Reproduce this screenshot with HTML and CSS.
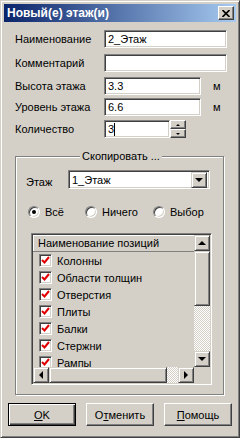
FILE: index.html
```html
<!DOCTYPE html>
<html lang="ru">
<head>
  <meta charset="UTF-8">
  <meta name="viewport" content="width=device-width, initial-scale=1.0">
  <title>Новый(е) этаж(и)</title>
  <link rel="stylesheet" href="styles.css">
</head>
<body>
  <div class="window">
    <div class="titlebar">
      <span class="title">Новый(е) этаж(и)</span>
      <div class="close-btn">
        <svg width="8" height="7" viewBox="0 0 8 7"><path d="M0.5 0 L7.5 7 M7.5 0 L0.5 7" stroke="#000" stroke-width="1.6"/></svg>
      </div>
    </div>

    <div class="content">
      <div class="row row-1">
        <span class="label">Наименование</span>
        <div class="edit edit-wide">2_Этаж</div>
      </div>
      <div class="row row-2">
        <span class="label">Комментарий</span>
        <div class="edit edit-wide"></div>
      </div>
      <div class="row row-3">
        <span class="label">Высота этажа</span>
        <div class="edit edit-mid">3.3</div>
        <span class="unit">м</span>
      </div>
      <div class="row row-4">
        <span class="label">Уровень этажа</span>
        <div class="edit edit-mid">6.6</div>
        <span class="unit">м</span>
      </div>
      <div class="row row-5">
        <span class="label">Количество</span>
        <div class="edit edit-short">3<span class="caret"></span></div>
        <div class="spinner">
          <div class="spin-btn"><span class="tri-up-small"></span></div>
          <div class="spin-btn"><span class="tri-down-small"></span></div>
        </div>
      </div>

      <div class="group">
        <span class="group-title">Скопировать ...</span>

        <div class="floor-row">
          <span class="floor-label">Этаж</span>
          <div class="combo">
            <span class="combo-text">1_Этаж</span>
            <div class="sbtn combo-btn"><span class="tri-down"></span></div>
          </div>
        </div>

        <div class="radios">
          <div class="radio-item r-all"><span class="radio checked"></span>Всё</div>
          <div class="radio-item r-none"><span class="radio"></span>Ничего</div>
          <div class="radio-item"><span class="radio"></span>Выбор</div>
        </div>

        <div class="list">
          <div class="list-body">
            <div class="list-header">Наименование позиций</div>
            <div class="list-row"><span class="check"><svg width="9" height="9" viewBox="0 0 9 9"><path d="M1 4 L3.5 6.5 L8 1" stroke="#e00000" stroke-width="2" fill="none"/></svg></span>Колонны</div>
            <div class="list-row"><span class="check"><svg width="9" height="9" viewBox="0 0 9 9"><path d="M1 4 L3.5 6.5 L8 1" stroke="#e00000" stroke-width="2" fill="none"/></svg></span>Области толщин</div>
            <div class="list-row"><span class="check"><svg width="9" height="9" viewBox="0 0 9 9"><path d="M1 4 L3.5 6.5 L8 1" stroke="#e00000" stroke-width="2" fill="none"/></svg></span>Отверстия</div>
            <div class="list-row"><span class="check"><svg width="9" height="9" viewBox="0 0 9 9"><path d="M1 4 L3.5 6.5 L8 1" stroke="#e00000" stroke-width="2" fill="none"/></svg></span>Плиты</div>
            <div class="list-row"><span class="check"><svg width="9" height="9" viewBox="0 0 9 9"><path d="M1 4 L3.5 6.5 L8 1" stroke="#e00000" stroke-width="2" fill="none"/></svg></span>Балки</div>
            <div class="list-row"><span class="check"><svg width="9" height="9" viewBox="0 0 9 9"><path d="M1 4 L3.5 6.5 L8 1" stroke="#e00000" stroke-width="2" fill="none"/></svg></span>Стержни</div>
            <div class="list-row"><span class="check"><svg width="9" height="9" viewBox="0 0 9 9"><path d="M1 4 L3.5 6.5 L8 1" stroke="#e00000" stroke-width="2" fill="none"/></svg></span>Рампы</div>
          </div>
          <div class="vscroll">
            <div class="sbtn"><span class="tri-up"></span></div>
            <div class="sbtn vthumb"></div>
            <div class="track"></div>
            <div class="sbtn"><span class="tri-down"></span></div>
          </div>
          <div class="hscroll">
            <div class="sbtn"><span class="tri-left"></span></div>
            <div class="sbtn hthumb"></div>
            <div class="track"></div>
            <div class="sbtn"><span class="tri-right"></span></div>
          </div>
          <div class="corner"></div>
        </div>
      </div>

      <div class="buttons">
        <div class="btn btn-default"><u>O</u>K</div>
        <div class="btn">О<u>т</u>менить</div>
        <div class="btn"><u>П</u>омощь</div>
      </div>
    </div>
  </div>
</body>
</html>
```

FILE: styles.css
```css
* {
  box-sizing: border-box;
}
body {
  margin: 0;
  background-color: #d4d0c8;
  font-family: "Liberation Sans", Arial, sans-serif;
  font-size: 11px;
  color: #000;
}
.window {
  width: 240px;
  height: 438px;
  background-color: #d4d0c8;
  border: 1px solid;
  border-color: #d4d0c8 #404040 #404040 #d4d0c8;
  box-shadow: inset 1px 1px #fff, inset -1px -1px #808080;
  padding: 3px;
}
.titlebar {
  height: 18px;
  background: linear-gradient(to right, #0a246a, #a6caf0);
  display: flex;
  align-items: center;
  justify-content: space-between;
  padding: 0 2px 0 3px;
}
.title {
  color: #fff;
  font-weight: bold;
  font-size: 12px;
}
.close-btn {
  width: 16px;
  height: 14px;
  background-color: #d4d0c8;
  border: 1px solid;
  border-color: #fff #404040 #404040 #fff;
  box-shadow: inset -1px -1px #808080;
  display: flex;
  align-items: center;
  justify-content: center;
}
.close-btn svg {
  display: block;
}
.content {
  padding: 8px 0 0 11px;
}

/* edit rows */
.row {
  display: flex;
  align-items: center;
  height: 18px;
}
.row-2 { margin-top: 6px; }
.row-3 { margin-top: 5px; }
.row-4 { margin-top: 3px; }
.row-5 { margin-top: 4px; }
.label {
  width: 89px;
}
.edit {
  height: 18px;
  background-color: #fff;
  border: 1px solid;
  border-color: #808080 #fff #fff #808080;
  box-shadow: inset 1px 1px #404040, inset -1px -1px #d4d0c8;
  padding: 2px 3px;
  line-height: 13px;
  display: flex;
  align-items: center;
}
.edit-wide { width: 123px; }
.edit-mid { width: 97px; }
.edit-short { width: 66px; }
.unit {
  margin-left: 12px;
}
.caret {
  display: inline-block;
  width: 1px;
  height: 13px;
  background-color: #000;
}
.spinner {
  width: 16px;
  height: 18px;
  display: flex;
  flex-direction: column;
}
.spin-btn {
  height: 9px;
  background-color: #d4d0c8;
  border: 1px solid;
  border-color: #fff #404040 #404040 #fff;
  box-shadow: inset -1px -1px #808080;
  display: flex;
  align-items: center;
  justify-content: center;
}
.tri-up-small {
  border-left: 2px solid transparent;
  border-right: 2px solid transparent;
  border-bottom: 2px solid #000;
}
.tri-down-small {
  border-left: 2px solid transparent;
  border-right: 2px solid transparent;
  border-top: 2px solid #000;
}

/* group box */
.group {
  position: relative;
  width: 209px;
  margin-top: 18px;
  border: 1px solid #808080;
  box-shadow: inset 1px 1px #fff, 1px 1px #fff;
  padding: 13px 0 9px 0;
}
.group-title {
  position: absolute;
  top: -7px;
  left: 64px;
  padding: 0 2px;
  background-color: #d4d0c8;
}
.floor-row {
  display: flex;
  align-items: center;
  padding-left: 10px;
}
.floor-label {
  width: 42px;
  padding-top: 5px;
}
.combo {
  width: 142px;
  height: 19px;
  background-color: #fff;
  border: 1px solid;
  border-color: #808080 #fff #fff #808080;
  box-shadow: inset 1px 1px #404040, inset -1px -1px #d4d0c8;
  padding: 2px;
  display: flex;
  align-items: center;
  justify-content: space-between;
}
.combo-text {
  padding-left: 1px;
}
.combo-btn {
  width: 16px;
  height: 15px;
}
.radios {
  display: flex;
  align-items: center;
  margin-top: 16px;
  padding-left: 12px;
  height: 13px;
}
.radio-item {
  display: flex;
  align-items: center;
}
.r-all { width: 57px; }
.r-none { width: 68px; }
.radio {
  width: 12px;
  height: 12px;
  border-radius: 50%;
  background-color: #fff;
  border: 1px solid;
  border-color: #808080 #fff #fff #808080;
  box-shadow: inset 1px 1px #404040, inset -1px -1px #d4d0c8;
  margin-right: 5px;
  display: flex;
  align-items: center;
  justify-content: center;
}
.radio.checked::after {
  content: "";
  width: 4px;
  height: 4px;
  border-radius: 50%;
  background-color: #000;
}

/* list with scrollbars */
.list {
  width: 181px;
  height: 152px;
  margin: 15px 0 0 15px;
  border: 1px solid;
  border-color: #808080 #fff #fff #808080;
  box-shadow: inset 1px 1px #404040, inset -1px -1px #d4d0c8;
  padding: 1px;
  display: grid;
  grid-template-columns: 1fr 16px;
  grid-template-rows: 1fr 16px;
}
.list-body {
  overflow: hidden;
}
.list-header {
  height: 17px;
  line-height: 16px;
  padding-left: 5px;
  border-bottom: 1px solid #808080;
  box-shadow: inset 1px 1px #fff;
}
.list-row {
  height: 17px;
  display: flex;
  align-items: center;
  padding-left: 6px;
}
.check {
  width: 13px;
  height: 13px;
  background-color: #fff;
  border: 1px solid;
  border-color: #808080 #fff #fff #808080;
  box-shadow: inset 1px 1px #404040, inset -1px -1px #d4d0c8;
  margin-right: 5px;
  display: flex;
  align-items: center;
  justify-content: center;
}
.check svg {
  display: block;
}
.vscroll {
  display: flex;
  flex-direction: column;
}
.hscroll {
  display: flex;
}
.sbtn {
  flex: none;
  width: 16px;
  height: 16px;
  background-color: #d4d0c8;
  border: 1px solid;
  border-color: #d4d0c8 #404040 #404040 #d4d0c8;
  box-shadow: inset 1px 1px #fff, inset -1px -1px #808080;
  display: flex;
  align-items: center;
  justify-content: center;
}
.vthumb {
  height: 55px;
}
.hthumb {
  width: 118px;
}
.track {
  flex: 1;
  background: repeating-conic-gradient(#fff 0 25%, #d4d0c8 0 50%) 0 0 / 2px 2px;
}
.corner {
  background-color: #d4d0c8;
}
.tri-up {
  border-left: 4px solid transparent;
  border-right: 4px solid transparent;
  border-bottom: 4px solid #000;
}
.tri-down {
  border-left: 4px solid transparent;
  border-right: 4px solid transparent;
  border-top: 4px solid #000;
}
.tri-left {
  border-top: 4px solid transparent;
  border-bottom: 4px solid transparent;
  border-right: 4px solid #000;
}
.tri-right {
  border-top: 4px solid transparent;
  border-bottom: 4px solid transparent;
  border-left: 4px solid #000;
}

/* buttons */
.buttons {
  display: flex;
  gap: 10px;
  margin: 8px 0 0 -7px;
}
.btn {
  width: 68px;
  height: 23px;
  background-color: #d4d0c8;
  border: 1px solid;
  border-color: #fff #404040 #404040 #fff;
  box-shadow: inset -1px -1px #808080;
  display: flex;
  align-items: center;
  justify-content: center;
}
.btn-default {
  border: 1px solid #000;
  box-shadow: inset 1px 1px #fff, inset -1px -1px #404040, inset -2px -2px #808080;
}
```
